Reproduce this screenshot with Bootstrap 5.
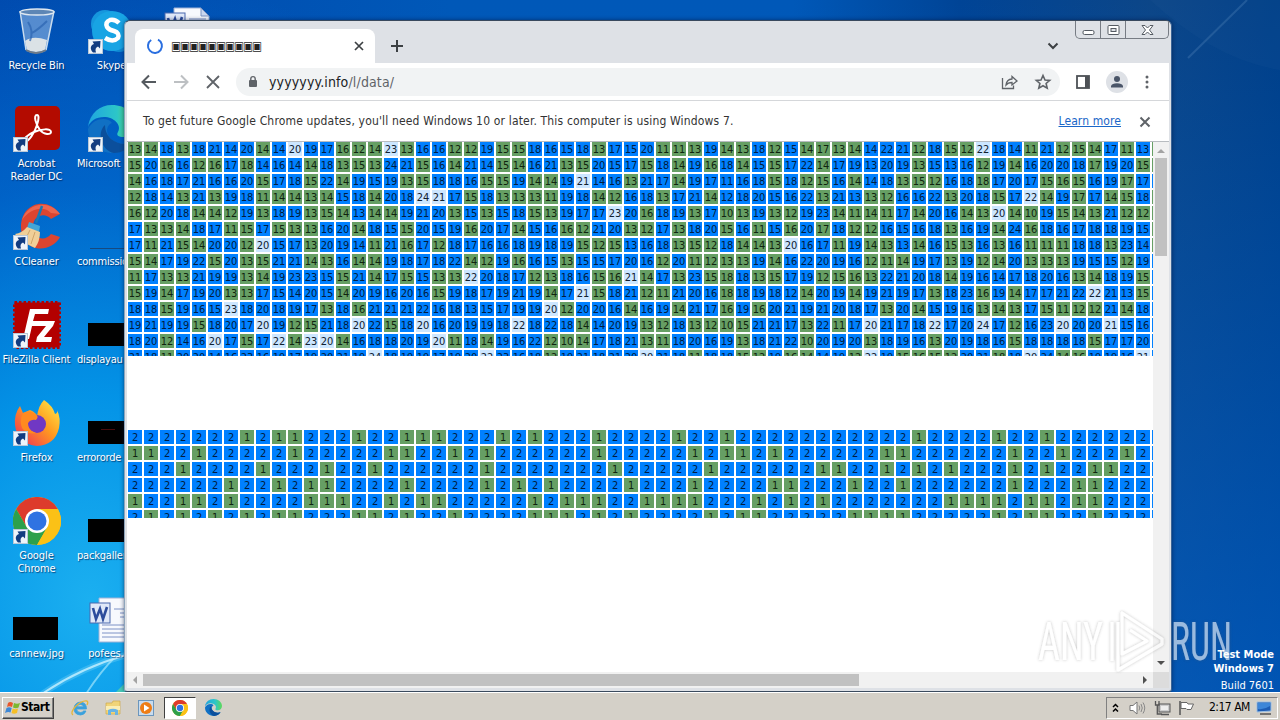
<!DOCTYPE html>
<html lang="en">
<head>
    <meta charset="UTF-8">
    <meta name="viewport" content="width=device-width, initial-scale=1.0">
    <title>Desktop</title>
    <link href="https://cdn.jsdelivr.net/npm/bootstrap@5.3.0/dist/css/bootstrap.min.css" rel="stylesheet">
    <style>
        body {
            width: 1280px;
            height: 720px;
            overflow: hidden;
            font-family: "DejaVu Sans Condensed", "DejaVu Sans", sans-serif;
            font-stretch: condensed;
            font-size: 11px;
            line-height: 13px;
            color: #000;
        }

        svg {
            display: block;
            flex: none;
        }

        /* Desktop */
        .desktop {
            height: 692px;
            background:
                radial-gradient(ellipse 520px 640px at 90px 600px, rgba(30, 185, 245, .9), rgba(4, 158, 238, .85) 32%, rgba(0, 120, 220, .5) 65%, rgba(0, 90, 200, 0) 100%),
                linear-gradient(180deg, rgba(0, 0, 0, 0) 0, rgba(0, 102, 215, .55) 100%),
                linear-gradient(90deg, #0048ac 0, #0058b8 35%, #0058b8 62%, #004496 75%, #0c4688 90%, #003f88 100%);
        }

        .wallpaper {
            left: 0;
            top: 0;
        }

        .icon-col {
            width: 75px;
            margin-left: -1px;
            margin-right: 1px;
        }

        .shortcut {
            height: 98px;
            padding-top: 7px;
        }

        .shortcut svg {
            margin-left: 1px;
        }

        .shortcut span {
            margin-top: 4px;
            color: #fff;
            text-align: center;
            white-space: nowrap;
            text-shadow: 1px 1px 1px rgba(0, 30, 80, .7);
            letter-spacing: -.1px;
        }

        .shortcut .cut {
            align-self: flex-start;
            margin-left: 3px;
            letter-spacing: -.2px;
        }

        .build-info {
            right: 6px;
            top: 648px;
            color: #fff;
            line-height: 14px;
        }

        .build-info .build-no {
            padding-top: 3px;
        }

        /* Browser window */
        .browser {
            left: 124px;
            top: 20px;
            width: 1048px;
            height: 672px;
            background: #dee1e6;
            border: 1px solid #3a4a5e;
            border-left-color: #8ea5bb;
            border-right-color: #3a6496;
            border-radius: 6px 6px 3px 3px;
            padding: 0 2px 2px;
            box-shadow: 0 0 4px rgba(0, 20, 60, .6);
        }

        .tab-strip {
            height: 42px;
            padding: 8px 0 0 8px;
        }

        .tab {
            width: 240px;
            height: 34px;
            padding: 0 10px 0 11px;
            background: #fff;
            border-radius: 8px 8px 0 0;
        }

        .tab-title {
            font-family: "DejaVu Sans", sans-serif;
            font-size: 12px;
            letter-spacing: -1.2px;
            color: #222;
            margin-left: 7px;
        }

        .tab-list {
            margin-right: 110px;
        }

        .win-buttons {
            top: 0;
            right: 0;
            width: 94px;
            height: 18px;
            border: 1px solid #777c84;
            border-top: 0;
            border-radius: 0 0 5px 5px;
        }

        .win-buttons div {
            width: 25px;
            border-right: 1px solid #777c84;
        }

        .win-buttons div:last-child {
            width: 42px;
            border-right: 0;
        }

        .toolbar {
            height: 38px;
            background: #fff;
            border-bottom: 1px solid #d5d7da;
            padding: 0 12px 0 12px;
        }

        .stop {
            margin-left: 6px;
        }

        .address {
            width: 824px;
            height: 28px;
            border-radius: 14px;
            background: #f1f3f4;
            padding: 0 8px 0 10px;
            font-size: 14px;
            line-height: 18px;
            color: #202124;
            margin-left: 15px;
        }

        .url {
            margin-left: 9px;
            letter-spacing: .14px;
        }

        .url span {
            color: #5f6368;
        }

        .infobar {
            height: 41px;
            background: #fff;
            padding: 1px 16px 0 16px;
            border-bottom: 1px solid #b8bcc0;
            font-size: 12px;
            color: #333;
        }

        .info-text {
            letter-spacing: .165px;
        }

        .infobar a {
            color: #1a66c8;
            letter-spacing: .1px;
        }

        .page {
            width: 1026px;
            height: 530px;
            background: #fff;
        }

        .matrix {
            display: grid;
            grid-template-columns: repeat(65, 14px);
            grid-auto-rows: 14px;
            gap: 2px;
            padding-left: 1px;
            overflow: hidden;
        }

        .matrix-top {
            height: 214px;
        }

        .matrix-low {
            height: 88px;
            margin-top: 74px;
        }

        .matrix div {
            background: #0080ff;
            color: #001c40;
            font-size: 11px;
            line-height: 15px;
            text-align: center;
            letter-spacing: -.1px;
            overflow: hidden;
            white-space: nowrap;
        }

        .matrix .g {
            background: #669f64;
            color: #10240f;
        }

        .matrix .w {
            background: #cce6ff;
            color: #102030;
        }

        .vscroll {
            width: 16px;
            background: #f1f1f1;
        }

        .vthumb {
            width: 12px;
            height: 98px;
            background: #c1c1c1;
        }

        .hscroll {
            width: 1026px;
            height: 16px;
            background: #f1f1f1;
        }

        .hthumb {
            width: 716px;
            height: 12px;
            background: #c1c1c1;
        }

        .corner {
            width: 16px;
            background: #dcdcdc;
        }

        /* Taskbar */
        .taskbar {
            height: 28px;
            background: #d4d0c8;
            border-top: 1px solid #fff;
            padding: 2px 2px 0 2px;
        }

        .start-btn {
            width: 52px;
            height: 22px;
            border: 1px solid;
            border-color: #fff #404040 #404040 #fff;
            box-shadow: inset -1px -1px 0 #808080;
            font-weight: bold;
            font-size: 12px;
            padding-left: 2px;
            letter-spacing: -.45px;
        }

        .explorer {
            margin-left: 14px;
        }

        .task-active {
            width: 32px;
            height: 22px;
            border: 1px solid;
            border-color: #404040 #fff #fff #404040;
            background: #fff;
            margin-left: 10px;
        }

        .task-edge {
            margin-left: 9px;
        }

        .tray {
            width: 172px;
            height: 22px;
            border: 1px solid;
            border-color: #808080 #fff #fff #808080;
        }

        .clock {
            font-size: 12px;
            letter-spacing: -.5px;
            white-space: nowrap;
            margin-left: 13px;
        }

        .watermark {
            left: 1030px;
            top: 602px;
            pointer-events: none;
        }
    </style>
</head>
<body>
    <!-- Shared icons -->
    <svg width="0" height="0" class="position-absolute">
        <defs>
            <symbol id="arrow" viewBox="0 0 15 15">
                <rect x=".5" y=".5" width="14" height="14" fill="#eef4fa" stroke="#b9c8d8" />
                <path d="M5 13.500C1.500 10 2.500 6 6 5L4.500 2.500 12.500 2 12 9.500 10 7.500C7.500 8.500 7 10.500 8 13.500z" fill="#123c80" />
            </symbol>
            <symbol id="chrome" viewBox="0 0 48 48">
                <circle cx="24" cy="24" r="24" fill="#fbc116" />
                <path d="M24 12H44.800A24 24 0 0 0 3.200 12L13.600 30z" fill="#dd3b2c" />
                <path d="M3.200 12L13.600 30 24 36 34.400 30 24 48A24 24 0 0 1 3.200 12z" fill="#2da04b" />
                <path d="M44.800 12A24 24 0 0 1 24 48L34.400 30V12z" fill="#fbc116" />
                <circle cx="24" cy="24" r="12" fill="#fff" />
                <circle cx="24" cy="24" r="9.500" fill="#2f73e2" />
            </symbol>
            <linearGradient id="edgeTop"><stop offset="0" stop-color="#1fa5e0" /><stop offset=".6" stop-color="#2cc6c8" /><stop offset="1" stop-color="#5fd957" /></linearGradient>
            <symbol id="edge" viewBox="0 0 48 48">
                <path d="M24 0C10 0 0 11 0 24 0 38 11 48 25 48 34 48 41 43 44 37 37 41 20 38 19 26 19 22 21 19 24 18 20 12 6 12 0 24 2 9 12 0 24 0z" fill="#1070c4" />
                <path d="M0 22C2 8 12 0 24 0 38 0 48 9 48 20 48 28 42 32 36 32 30 32 28 30 30 27 34 20 26 12 16 12 8 12 2 16 0 22z" fill="url(#edgeTop)" />
                <path d="M17 20C8 28 14 46 26 48 35 48 41 43 44 37 34 42 17 36 17 20z" fill="#0b4f9c" />
            </symbol>
            <symbol id="word" viewBox="0 0 48 48">
                <path d="M11 3H38L46 11V47H11z" fill="#f7f9fd" stroke="#9fb2d6" />
                <path d="M38 3V11H46z" fill="#c9d6ee" stroke="#7d93c0" />
                <path d="M26 14H43M32 18H43M32 22H43M14 30H43M14 34H43M14 38H43M14 42H43" stroke="#7c92c6" />
                <rect x="2" y="8" width="20" height="20" fill="#dfe8f8" stroke="#4a68ae" />
                <path d="M5 13L8 24 12 14 15 24 19 12" fill="none" stroke="#2c4c9c" stroke-width="2.600" />
            </symbol>
            <symbol id="thumb" viewBox="0 0 48 48">
                <rect x="0" y="22" width="45" height="23" />
            </symbol>
        </defs>
    </svg>

    <div class="desktop position-relative overflow-hidden">
        <svg class="wallpaper position-absolute" width="1280" height="692">
            <path d="M42 694Q80 668 126 655" fill="none" stroke="#d9f6ff" stroke-width="2" opacity=".8" />
            <path d="M42 694Q80 668 126 655" fill="none" stroke="#9fe6ff" stroke-width="6" opacity=".25" />
            <path d="M86 694Q100 672 116 656" fill="none" stroke="#b8f0ff" stroke-width="1.800" opacity=".6" />
            <path d="M116 692L125 683V692z" fill="#5fd8a0" opacity=".7" />
            <path d="M1247 0L1188 58" stroke="#6f9ccc" stroke-width="2" opacity=".25" />
            <path d="M1150 0Q1215 60 1280 70V0z" fill="#3a78a8" opacity=".08" />
        </svg>

        <div class="d-flex position-relative">
            <div class="icon-col d-flex flex-column">
                <div class="shortcut d-flex flex-column align-items-center">
                    <svg width="48" height="48" viewBox="0 0 48 48">
                        <path d="M7 4L13 44Q24 49 33 44L41 4z" fill="#a9c8ea" opacity=".5" />
                        <path d="M12 34Q20 28 34 33L32 43Q23 47 14 43z" fill="#f3f1ea" opacity=".85" />
                        <path d="M15 15Q21 24 17 34M34 14Q26 22 19 26" stroke="#2b64b0" stroke-width="2" fill="none" opacity=".7" />
                        <path d="M7 4L13 43M41 4L33 43" stroke="#c9dcee" stroke-width="1.500" />
                        <ellipse cx="24" cy="5" rx="17" ry="3" fill="#5d86b5" stroke="#dfe8f0" stroke-width="1.300" />
                        <path d="M13 43Q23 49 33 43" stroke="#6d7a88" stroke-width="2" fill="none" />
                    </svg>
                    <span>Recycle Bin</span>
                </div>
                <div class="shortcut d-flex flex-column align-items-center">
                    <svg width="48" height="48" viewBox="0 0 48 48">
                        <rect x="2" y="1" width="45" height="44" rx="5" fill="#b30b00" />
                        <path d="M24 10C20 10 23 20 27 25 31 30 38 30 38 27 38 23 28 24 21 27 14 30 10 34 12 36 15 38 22 27 24 20 26 14 26 10 24 10z" fill="none" stroke="#fff" stroke-width="2" />
                        <use href="#arrow" x="0" y="32" width="15" height="15" />
                    </svg>
                    <span>Acrobat<br>Reader DC</span>
                </div>
                <div class="shortcut d-flex flex-column align-items-center">
                    <svg width="48" height="48" viewBox="0 0 48 48">
                        <path d="M47 11C34-7 8 0 8 24 8 49 37 52 47 34L38 31C32 39 20 36 20 24 20 12 32 9 38 16z" fill="#dc4530" />
                        <path d="M47 11C36-4 14 0 9 17 18 4 32 3 38 10z" fill="#f2755c" opacity=".7" />
                        <path d="M29 3L23 20" stroke="#1679b5" stroke-width="2.500" />
                        <path d="M16 19L27 23 26 29 14 25z" fill="#41a6d8" />
                        <path d="M14 24L27 29Q27 38 22 45 10 40 2 31 9 30 14 24z" fill="#f0cf98" />
                        <path d="M17 27L12 37M22 29L18 41" stroke="#cfa468" />
                        <use href="#arrow" x="0" y="32" width="15" height="15" />
                    </svg>
                    <span>CCleaner</span>
                </div>
                <div class="shortcut d-flex flex-column align-items-center">
                    <svg width="48" height="48" viewBox="0 0 48 48">
                        <rect x="1.500" y="1.500" width="45" height="45" fill="#b30000" stroke="#b30000" stroke-width="3" stroke-dasharray="2.500 2" />
                        <path d="M10 38L17 8H36L35 13H22L20 20H31L30 25H19L16 38z" fill="#fff" />
                        <path d="M26 20H42L40 25 31 36H39L38 41H23L24 36 33 25H25z" fill="#fff" />
                        <use href="#arrow" x="0" y="32" width="15" height="15" />
                    </svg>
                    <span>FileZilla Client</span>
                </div>
                <div class="shortcut d-flex flex-column align-items-center">
                    <svg width="48" height="48" viewBox="0 0 48 48">
                        <defs>
                            <linearGradient id="fox" x1="1" y1="0" x2="0" y2="1"><stop offset="0" stop-color="#fff04a" /><stop offset=".45" stop-color="#ff9a20" /><stop offset="1" stop-color="#f0245c" /></linearGradient>
                        </defs>
                        <path d="M31 1Q40 7 42 15 45 14 44 11 48 19 46 29 42 46 24 47 4 45 2 26 1 15 7 7L10 14 17 11Q24 14 24 18 25 7 31 1z" fill="url(#fox)" />
                        <circle cx="24" cy="25" r="9" fill="#7038c4" />
                        <path d="M10 14Q16 11 21 14 27 17 23 21 18 20 15 24 14 31 23 34 14 36 9 29 6 22 10 14z" fill="#ff8a20" />
                        <use href="#arrow" x="0" y="32" width="15" height="15" />
                    </svg>
                    <span>Firefox</span>
                </div>
                <div class="shortcut d-flex flex-column align-items-center">
                    <svg width="48" height="48" viewBox="0 0 48 48">
                        <use href="#chrome" width="48" height="48" />
                        <use href="#arrow" x="0" y="32" width="15" height="15" />
                    </svg>
                    <span>Google<br>Chrome</span>
                </div>
                <div class="shortcut d-flex flex-column align-items-center">
                    <svg width="48" height="48"><use href="#thumb" width="48" height="48" /></svg>
                    <span>cannew.jpg</span>
                </div>
            </div>

            <!-- Second column, half covered by the window -->
            <div class="icon-col d-flex flex-column">
                <div class="shortcut d-flex flex-column align-items-center">
                    <svg width="48" height="48" viewBox="0 0 48 48">
                        <circle cx="17" cy="17" r="14" fill="#1697dd" />
                        <circle cx="31" cy="31" r="14" fill="#0f87d2" />
                        <circle cx="24" cy="24" r="20" fill="#18a4e4" />
                        <path d="M31 16Q27 12 22 13 17 15 19 20 21 23 26 24 32 26 30 31 25 36 17 31" fill="none" stroke="#fff" stroke-width="4.500" />
                        <use href="#arrow" x="0" y="32" width="15" height="15" />
                    </svg>
                    <span>Skype</span>
                </div>
                <div class="shortcut d-flex flex-column align-items-center">
                    <svg width="48" height="48" viewBox="0 0 48 48">
                        <use href="#edge" width="48" height="48" />
                        <use href="#arrow" x="0" y="32" width="15" height="15" />
                    </svg>
                    <span class="cut">Microsoft</span>
                </div>
                <div class="shortcut d-flex flex-column align-items-center">
                    <svg width="48" height="48"><path d="M2 45.500H48" stroke="#174a80" /></svg>
                    <span class="cut">commissio</span>
                </div>
                <div class="shortcut d-flex flex-column align-items-center">
                    <svg width="48" height="48"><use href="#thumb" width="48" height="48" /></svg>
                    <span class="cut">displayau</span>
                </div>
                <div class="shortcut d-flex flex-column align-items-center">
                    <svg width="48" height="48"><use href="#thumb" width="48" height="48" /><path d="M13 30.500H27" stroke="#4a0c0c" /></svg>
                    <span class="cut">errororde</span>
                </div>
                <div class="shortcut d-flex flex-column align-items-center">
                    <svg width="48" height="48"><use href="#thumb" width="48" height="48" /></svg>
                    <span class="cut">packgaller</span>
                </div>
                <div class="shortcut d-flex flex-column align-items-center">
                    <svg width="48" height="48"><use href="#word" width="48" height="48" /></svg>
                    <span>pofees.rtf</span>
                </div>
            </div>

            <div class="icon-col d-flex flex-column">
                <div class="shortcut d-flex flex-column align-items-center">
                    <svg width="48" height="48"><use href="#word" y="-2" width="48" height="48" /></svg>
                </div>
            </div>
        </div>

        <div class="build-info position-absolute text-end">
            <div class="fw-bold">Test Mode</div>
            <div class="fw-bold">Windows 7</div>
            <div class="build-no">Build 7601</div>
        </div>

        <div class="browser position-absolute">
            <div class="tab-strip d-flex position-relative">
                <div class="tab d-flex align-items-center">
                    <svg width="18" height="18" viewBox="0 0 18 18"><path d="M12 2.600A7 7 0 1 1 5.200 3" fill="none" stroke="#2a6fe0" stroke-width="2" /></svg>
                    <span class="tab-title">▣▣▣▣▣▣▣▣▣▣</span>
                    <svg class="ms-auto" width="12" height="12" viewBox="0 0 12 12"><path d="M2 2L10 10M10 2L2 10" stroke="#3c4043" stroke-width="1.700" /></svg>
                </div>
                <svg class="ms-3 mt-2" width="14" height="18" viewBox="0 0 14 18"><path d="M6 3V15M0 9H12" stroke="#3c4043" stroke-width="2" /></svg>
                <svg class="tab-list ms-auto mt-2" width="12" height="18" viewBox="0 0 12 18"><path d="M1.500 6.500L6 11 10.500 6.500" fill="none" stroke="#3c4043" stroke-width="2" /></svg>
                <div class="win-buttons position-absolute d-flex">
                    <div class="d-flex justify-content-center align-items-center"><svg width="13" height="14"><rect x="1" y="7.500" width="11" height="4" rx="1.500" fill="#fff" stroke="#555b63" /></svg></div>
                    <div class="d-flex justify-content-center align-items-center"><svg width="13" height="12"><rect x="1" y="1.500" width="11" height="9" rx="1" fill="#fff" stroke="#555b63" /><rect x="4" y="4.500" width="5" height="3" fill="#dee1e6" stroke="#555b63" /></svg></div>
                    <div class="d-flex justify-content-center align-items-center"><svg width="13" height="12" viewBox="0 0 13 12"><path d="M1 1.500H4L6.500 4 9 1.500H12L8.500 6 12 10.500H9L6.500 8 4 10.500H1L4.500 6z" fill="#fff" stroke="#555b63" /></svg></div>
                </div>
            </div>

            <div class="toolbar d-flex align-items-center">
                <svg width="20" height="20" viewBox="0 0 20 20"><path d="M17 10H4M10 3.500L3.500 10 10 16.500" fill="none" stroke="#555a5f" stroke-width="2" /></svg>
                <svg class="ms-2 me-1 ps-1" width="28" height="20" viewBox="-1 0 24 20"><path d="M2 10H15M9 3.500L15.500 10 9 16.500" fill="none" stroke="#bdc0c3" stroke-width="2" /></svg>
                <svg class="stop" width="16" height="16" viewBox="0 0 16 16"><path d="M2 2L14 14M14 2L2 14" stroke="#5f6368" stroke-width="1.800" /></svg>
                <div class="address d-flex align-items-center">
                    <svg width="14" height="14" viewBox="0 0 14 14"><rect x="3" y="5" width="8" height="7" rx="1" fill="#5f6368" /><path d="M4.800 6V3.800A2.200 2.200 0 0 1 9.200 3.800V6" fill="none" stroke="#5f6368" stroke-width="1.400" /></svg>
                    <div class="url">yyyyyyy.info<span>/l/data/</span></div>
                    <svg class="ms-auto me-3" width="18" height="18" viewBox="-2 0 18 18"><path d="M.5 5V15.500H11.500V12.500" fill="none" stroke="#5f6368" stroke-width="1.300" /><path d="M4 12Q4.500 6.500 10 6V3.500L15 8 10 12V9.500Q6 9.500 4 12z" fill="none" stroke="#5f6368" stroke-width="1.300" /></svg>
                    <svg width="18" height="18" viewBox="0 0 18 18"><path d="M9 2.500L11 7 15.700 7.400 12.100 10.500 13.200 15.200 9 12.700 4.800 15.200 5.900 10.500 2.300 7.400 7 7z" fill="none" stroke="#5f6368" stroke-width="1.600" /></svg>
                </div>
                <svg class="ms-3" width="14" height="14" viewBox="0 0 14 14"><rect x="1" y="1" width="12" height="12" fill="#fff" stroke="#4d5156" stroke-width="1.800" /><path d="M9 1H13V13H9z" fill="#4d5156" /></svg>
                <svg class="ms-3" width="22" height="22" viewBox="2 0 22 22"><circle cx="13" cy="11" r="11" fill="#dee1e6" /><circle cx="13" cy="8" r="3" fill="#4a5568" /><path d="M7 16.500V15Q8 12.200 13 12.200 18 12.200 19 15V16.500z" fill="#4a5568" /></svg>
                <svg class="ms-auto me-2" width="4" height="16" viewBox="0 0 4 16"><g fill="#5f6368"><circle cx="2" cy="3" r="1.500" /><circle cx="2" cy="8" r="1.500" /><circle cx="2" cy="13" r="1.500" /></g></svg>
            </div>

            <div class="infobar d-flex align-items-center">
                <span class="info-text">To get future Google Chrome updates, you'll need Windows 10 or later. This computer is using Windows 7.</span>
                <a href="#" class="ms-auto">Learn more</a>
                <svg class="ms-3" width="16" height="14" viewBox="0 0 16 14"><path d="M3.500 2.500L12.500 11.500M12.500 2.500L3.500 11.500" stroke="#5f6368" stroke-width="2" /></svg>
            </div>

            <div class="d-flex">
                <div class="page">
                    <div class="matrix matrix-top" id="counts"></div>
                    <div class="matrix matrix-low" id="flags"></div>
                </div>
                <div class="vscroll d-flex flex-column align-items-center">
                    <svg width="16" height="16"><path d="M4 11H12L8 7z" fill="#a3a3a3" /></svg>
                    <div class="vthumb"></div>
                    <svg class="mt-auto" width="16" height="18"><path d="M4 7H12L8 11z" fill="#505050" /></svg>
                </div>
            </div>
            <div class="d-flex">
                <div class="hscroll d-flex align-items-center">
                    <svg width="16" height="16"><path d="M10 4V12L6 8z" fill="#a3a3a3" /></svg>
                    <div class="hthumb"></div>
                    <svg class="ms-auto" width="16" height="16"><path d="M6 4V12L10 8z" fill="#505050" /></svg>
                </div>
                <div class="corner"></div>
            </div>
        </div>
    </div>

    <div class="taskbar d-flex align-items-center">
        <div class="start-btn d-flex align-items-center">
            <svg width="16" height="16" viewBox="0 0 16 16">
                <path d="M3 3Q5 1 8 3L7 7Q4 5.500 2 7z" fill="#e8562a" />
                <path d="M9 3Q12 4.500 15 3L13.500 7.500Q11 9 8 7.500z" fill="#7cb82f" />
                <path d="M1.500 8Q4 6.500 6.700 8L5.500 12.500Q3 11.500 0 13z" fill="#3d88d6" />
                <path d="M7.700 8.500Q10.500 10 13 8.500L12 13Q9 14.500 6.500 13z" fill="#f6bf26" />
            </svg>
            <span>Start</span>
        </div>
        <svg class="ms-3" width="20" height="20" viewBox="0 0 20 20">
            <path d="M16.500 11H6.500Q7 14.500 10.500 14.500 12.500 14.500 13.500 13H16Q14.500 17 10.500 17 4 16.500 4 10.500 4.500 4.500 10.500 4 16.500 4.500 16.500 11zM6.800 8.800H13.700Q13 6.500 10.300 6.500 7.500 6.500 6.800 8.800z" fill="#3ba1dc" stroke="#3ba1dc" stroke-width=".8" />
            <path d="M3 17Q0 15 5 9 12 2 17 3 18.500 4 17 7" fill="none" stroke="#e6b63a" stroke-width="1.300" />
        </svg>
        <svg class="explorer" width="18" height="18" viewBox="0 0 18 18">
            <path d="M2 4H8L9 2H16V15H2z" fill="#f0d478" stroke="#cfa94a" stroke-width=".7" />
            <path d="M2 7H16V11H2z" fill="#fbeeb4" />
            <path d="M4 16V11Q9 8.500 14 11V16H11V13H7V16z" fill="#69b4e4" />
        </svg>
        <svg class="ms-3" width="16" height="16" viewBox="0 0 16 16">
            <rect x=".5" y=".5" width="15" height="15" fill="#c9dcee" stroke="#6b96bd" />
            <circle cx="8" cy="8" r="6" fill="#ee7d16" />
            <path d="M6 4.500L11.500 8 6 11.500z" fill="#fff" />
        </svg>
        <div class="task-active d-flex align-items-center justify-content-center">
            <svg width="16" height="16"><use href="#chrome" width="16" height="16" /></svg>
        </div>
        <svg class="task-edge" width="17" height="17"><use href="#edge" width="17" height="17" /></svg>
        <div class="tray d-flex align-items-center ms-auto">
            <svg class="ms-1" width="10" height="12" viewBox="0 0 10 12"><path d="M2 5L4.500 2.500 7 5M2 9.500L4.500 7 7 9.500" fill="none" stroke="#000" stroke-width="1.500" /></svg>
            <svg class="ms-2" width="17" height="16" viewBox="0 0 17 16"><path d="M1 5.500H4L8 2V14L4 10.500H1z" fill="#fff" stroke="#777" /><path d="M10 5.500Q11.500 8 10 10.500M12 4Q14.500 8 12 12M14 2.500Q17.500 8 14 13.500" fill="none" stroke="#888" /></svg>
            <svg class="ms-2" width="17" height="16" viewBox="0 0 17 16"><rect x="5" y="4" width="11" height="8" fill="#ccc" stroke="#555" /><path d="M7 14.500H15M1.500 1V5H5V1M3.300 5V14H8" fill="none" stroke="#555" stroke-width="1.300" /><rect x="7" y="6" width="7" height="4" fill="#eee" /></svg>
            <svg class="ms-2" width="17" height="16" viewBox="1 0 17 16"><path d="M2 1V15" stroke="#555" stroke-width="1.500" /><path d="M3 2.500H9L10 4H15.500L13 9.500H9L8 8.500H3z" fill="#fff" stroke="#666" /></svg>
            <span class="clock">2:17 AM</span>
            <svg class="ms-auto me-1" width="17" height="16" viewBox="0 0 17 16"><path d="M1 2H15V11L1 12z" fill="#1d5cb4" stroke="#9cc0e4" /><path d="M2 3H14V6Q8 10 2 9z" fill="#3d86d8" /><path d="M4 14H15" stroke="#555" stroke-width="1.500" /></svg>
        </div>
    </div>

    <!-- Overlay mark -->
    <svg class="watermark position-absolute" width="210" height="80" viewBox="0 0 210 80">
        <defs>
            <filter id="soft" x="-10%" y="-10%" width="120%" height="120%"><feDropShadow dx="0" dy="0" stdDeviation="1.600" flood-color="#555" flood-opacity=".6" /></filter>
        </defs>
        <g filter="url(#soft)" opacity=".6">
            <g font-family="Roboto, sans-serif" font-size="54" fill="#fff">
                <text x="8" y="58" textLength="65" lengthAdjust="spacingAndGlyphs">ANY</text>
                <text x="141" y="58" textLength="61" lengthAdjust="spacingAndGlyphs">RUN</text>
            </g>
            <path d="M82 20V59M88 20V68L132 42V37L92 11V52L117 39 100 28" fill="none" stroke="#fff" stroke-width="3.200" stroke-linejoin="round" />
        </g>
    </svg>

    <script src="https://cdn.jsdelivr.net/npm/bootstrap@5.3.0/dist/js/bootstrap.bundle.min.js"></script>

    <script>
        // Cell values, suffix g = green, w = pale, none = blue
        const counts = [
            '13g 14g 18 13g 18 21 14 20 14g 14 20w 19 17 16g 12g 14g 23w 13g 16 16 12g 12g 19 15g 15g 18 16 15 18 13g 17 15 20 11g 11g 13g 19 14g 13g 18 12g 15 14g 17g 13g 14g 14 22 21 12g 18 15g 12g 22w 18 14 11g 21 12g 15g 14g 17 11g 13',
            '15g 20 16g 16 12g 16g 17 18g 14 16 14 14g 18 13g 15g 13g 24 21 15g 16 14g 21 14 15g 14g 16 21 13g 15g 20 15 17 15g 18 14g 19 16g 18 14g 15 15g 17 22 14g 17 19 13 20 19 13g 15 13 16 12g 19 14g 16 20 20 18 17g 19 20 15g',
            '14g 16 18 17 21 16 16 20 15g 17 18 15g 22 14g 19 15 19 13g 15g 18 18 16 15g 15g 19 14g 14g 19 21w 14 16 13g 21 17 14g 19 17 11 16 18 15g 18 12g 15g 16 14g 14 18 13g 15g 12g 16 18 18g 17 20 17 15g 16g 15g 16 19 17g 17',
            '12g 18 14 13g 21 13g 19 18 11g 14g 14g 13g 14g 15 18 14g 20 18 24w 21w 17 15g 18 13g 13g 13g 11g 19 18 14g 12g 16 18 13g 17 21 14g 12 18 20 15 16 22 13g 21 13 13g 12g 16 16 22 13g 20 18 15g 17 22w 14g 19 17g 17 14g 15g 18',
            '16g 12g 20 18 14g 14g 12g 19 13g 18 19 13g 15g 14g 13 14g 14g 19 21 20 13g 15 13g 15 18 15g 13g 19 17 17 23w 20 16g 18 19 13g 17 10g 13g 19 13g 12g 19 23 14g 11g 14g 11g 17 14g 20 16 14g 13g 20w 14g 10g 19 15g 14g 13g 21 12g 12g',
            '17 13g 13g 14g 18 17 11g 15g 17 15g 13g 13g 16 20 14g 18 15 15g 20 15 19 16g 20 17 14g 15 16 16g 12g 21 20 13g 12g 17 13g 18 20 15g 16 11g 15 16g 20 17g 18 12g 12g 16 15 16 18 13g 16 19 14g 24 16g 18 16 17 18 18 19 15',
            '17 11g 21 15g 14g 20 20 12g 20w 15 17 13g 20 19 14 11g 21 16g 17 12g 18 17 16 16 18 19 18 19 15g 12g 15g 13 16 18 13g 15g 12g 18 14g 14g 13g 20w 16 17 11g 19 14g 13g 13 14g 16 15g 13g 16 13g 16 11g 11g 11g 18 18 13g 23 14',
            '15g 14g 17 19 22 15g 20 13g 15g 21 21 14g 13g 16 14g 14g 19 18 17 18 22 14g 12g 19 16g 16 15 13g 15 15 17 20 16 12g 20 11g 12g 13g 13g 19 14g 16 22 20 19 16 12g 11g 14g 19 17 13g 19 12g 14g 20 13g 13g 13g 19 15 15 12g 19',
            '11g 17 13g 13g 21 19 19 13g 14g 19 23 23 15 15g 21 14g 17 15g 15 13g 13g 22w 20 18 17 12g 13g 18 16 15g 16g 21w 14g 17 13g 23 15g 18g 18 13g 15g 17 19 12g 15g 16g 13g 22 21 20 18 14g 19 16 14 17 18 20 16 13g 14g 18 19 15g',
            '15g 19 14g 17 19 20 13g 13g 17 15 14 20 15 14g 20 19 16 20 16 15g 19 18 17 19 21 19 14g 17 21w 15g 18 21 12g 11g 21 20 16 18g 18 19 18 12 14g 20 19 14g 19 21 19 17 13g 18 23 16g 19 14g 17 17 21 22 22w 21 13 15g',
            '18 18 15g 19 16 15 23w 18 20 18 19 17 13g 18 16g 21 21 21 22 16 18 13 15 17 19 19 20w 12g 20 20 16 14g 16 19 14g 21 17 16g 19 16g 20 21 19 21 20 18 17 13g 20 14g 15 19 16 13g 14g 13g 17 15g 11g 12g 12g 21 14g 18',
            '19 21 19 19 15g 18 20 17 20w 19 12g 15g 21 18 20w 22 15g 18 20w 16 20 19 19 18 22w 18 22 18 14g 14 20 19 13g 12g 18 13g 12g 10g 15g 21 21 17 13g 22 11g 17 20w 21 17 18 22w 17 20 24w 17 12g 16 23 20w 20 20 21w 15 16',
            '18 20 12g 14 16 20w 17 15g 17 22w 14g 23w 20w 14g 16 18 18 20 19 20w 11g 18 14g 19 16 22 12g 10g 14g 17 18 21 13g 11g 18 20 16 19 13g 18 21 22 10g 20 19 20 13g 18 19 16 13g 20 19 18 16 15g 18 18 18 18 15g 17 17 20',
            '21 18 11g 20 20 14 16 23 16 19 17 19 20 21 19 24w 18 19 19 17 19 20 22w 23 16 18 12g 19 21 18 21 20 20w 21 18 11g 18 18 15g 12g 19 16g 14g 14 19 12g 22w 19 15g 16g 15g 12g 20 21 18g 18 20w 24 14g 16g 19 19 16 21w'
        ];

        const flags = [
            '2222222121122212211122' + '212122212222122122222' + '222222122221221222222',
            '1122122222122222112212' + '122222212222212112122' + '222211222222122122212',
            '2221222212221221222222' + '122222221222221222222' + '112212121222121221122',
            '2222221221211222212222' + '121212222122212222112' + '221221222222122211222',
            '1221121222211122121122' + '222121112211112221212' + '122222221111211211222',
            '2121212121122211212212' + '222111212122221211222' + '221111222221211221222'
        ];

        function addCell(parent, text, cls) {
            const cell = document.createElement('div');
            cell.textContent = text;
            if (cls) {
                cell.className = cls;
            }
            parent.appendChild(cell);
        }

        const countsBox = document.getElementById('counts');
        counts.forEach((row, i) => {
            row.split(' ').forEach(item => addCell(countsBox, item.slice(0, 2), item.slice(2)));
            // the column cut off by the scrollbar
            addCell(countsBox, '', i < 7 && i !== 2 ? 'g' : '');
        });

        const flagsBox = document.getElementById('flags');
        flags.forEach(row => {
            row.split('').forEach(n => addCell(flagsBox, n, n === '1' ? 'g' : ''));
            addCell(flagsBox, '', '');
        });
    </script>
</body>
</html>
